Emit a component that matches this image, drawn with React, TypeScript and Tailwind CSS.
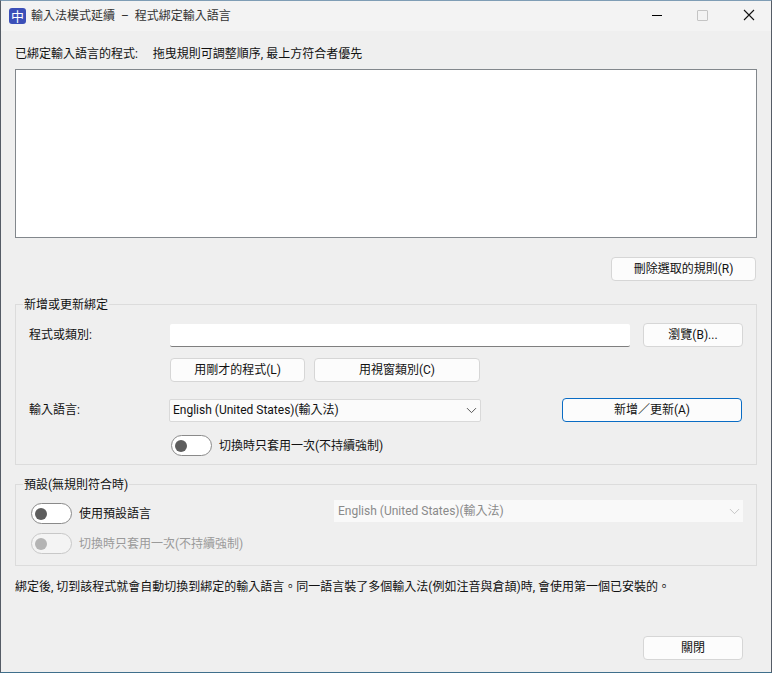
import { ChevronDown } from "lucide-react";

const font = "font-['Roboto','Noto_Sans_CJK_TC',sans-serif]";

const Toggle = ({ disabled = false }: { disabled?: boolean }) => (
  <div
    className={`flex h-[21px] w-[41px] shrink-0 items-center rounded-full border pl-[3px] ${
      disabled ? "border-[#c8c8c8] bg-[#f4f4f4]" : "border-[#8a8a8a] bg-white"
    }`}
  >
    <div className={`size-[12px] rounded-full ${disabled ? "bg-[#b4b4b4]" : "bg-[#5d5d5d]"}`} />
  </div>
);

const Btn = ({ label, className = "", primary = false }: { label: string; className?: string; primary?: boolean }) => (
  <button
    className={`flex h-[24px] items-center justify-center rounded-[4px] border bg-[#fcfcfc] text-[12px] text-[#111] ${
      primary ? "border-[#0a6cc4]" : "border-[#d6d6d6]"
    } ${className}`}
  >
    {label}
  </button>
);

export default function App() {
  return (
    <div className={`flex h-[673px] w-[772px] flex-col overflow-hidden border-x border-b border-t border-x-[#555c66] border-b-[#3f6f8c] border-t-[#7f9db5] bg-[#efefef] text-[12px] leading-[16px] text-[#111] ${font}`}>
      {/* Title bar */}
      <div className="flex h-[30px] shrink-0 items-center bg-[#f3f3f3] pl-[8px]">
        <div className="flex h-[16px] w-[17px] items-center justify-center rounded-[3px] bg-[#3b4fb8] text-[13px] leading-none text-white">中</div>
        <span className="ml-[5px] whitespace-pre text-[#333]">輸入法模式延續  –  程式綁定輸入語言</span>
        <div className="ml-auto flex items-center pb-[2px] pr-[16px]">
          <div className="h-[1px] w-[10px] bg-black" />
          <div className="ml-[35px] size-[11px] rounded-[1px] border border-[#c4c4c4]" />
          <svg viewBox="0 0 12 12" className="ml-[35px] size-[12px] text-[#111]" fill="none" stroke="currentColor" strokeWidth="1.1">
            <path d="M1 1l10 10M11 1L1 11" />
          </svg>
        </div>
      </div>

      <div className="flex flex-1 flex-col px-[14px]">
        <div className="mt-[15px] flex h-[16px] items-center whitespace-pre">已綁定輸入語言的程式:     拖曳規則可調整順序, 最上方符合者優先</div>

        {/* Rule list */}
        <div className="mt-[7px] h-[169px] w-[742px] shrink-0 border border-[#82878c] bg-white" />

        <div className="mt-[19px] flex w-[741px] justify-end">
          <Btn label="刪除選取的規則(R)" className="w-[145px]" />
        </div>

        {/* Add or update */}
        <fieldset className="mt-[14px] h-[170px] w-[742px] shrink-0 border border-[#dcdcdc] px-[7px]">
          <legend className="px-[1px] pt-[2px] leading-[16px]">新增或更新綁定</legend>
          <div className="mt-[10px] flex items-center pl-[6px]">
            <span className="w-[141px]">程式或類別:</span>
            <div className="h-[23px] w-[460px] rounded-[2px] border-b border-[#7f7f7f] bg-white" />
            <Btn label="瀏覽(B)..." className="ml-[13px] w-[100px]" />
          </div>
          <div className="mt-[11px] flex gap-[9px] pl-[147px]">
            <Btn label="用剛才的程式(L)" className="w-[135px]" />
            <Btn label="用視窗類別(C)" className="w-[166px]" />
          </div>
          <div className="mt-[16px] flex items-center pl-[6px]">
            <span className="w-[140px]">輸入語言:</span>
            <div className="flex h-[23px] w-[312px] items-center justify-between rounded-[2px] border border-[#d9d9d9] bg-[#fbfbfb] pl-[3px]">
              <span>English (United States)(輸入法)</span>
              <ChevronDown size={17} strokeWidth={1.4} className="text-[#555]" />
            </div>
            <Btn label="新增／更新(A)" primary className="ml-[81px] w-[180px]" />
          </div>
          <div className="mt-[13px] flex items-center gap-[7px] pl-[148px]">
            <Toggle />
            <span>切換時只套用一次(不持續強制)</span>
          </div>
        </fieldset>

        {/* Default */}
        <fieldset className="mt-[10px] h-[91px] w-[742px] shrink-0 border border-[#dcdcdc] px-[7px]">
          <legend className="px-[1px] pt-[2px] leading-[16px]">預設(無規則符合時)</legend>
          <div className="mt-[10px] flex h-[21px] items-start pl-[8px]">
            <Toggle />
            <span className="ml-[7px] w-[255px] self-center">使用預設語言</span>
            <div className="-mt-[3px] flex h-[22px] w-[409px] items-center justify-between bg-[#f9f9f9] pl-[4px] text-[#8a8a8a]">
              <span>English (United States)(輸入法)</span>
              <ChevronDown size={17} strokeWidth={1} className="text-[#b0b0b0]" />
            </div>
          </div>
          <div className="mt-[9px] flex items-center gap-[7px] pl-[8px] text-[#9a9a9a]">
            <Toggle disabled />
            <span>切換時只套用一次(不持續強制)</span>
          </div>
        </fieldset>

        <p className="mt-[13px] whitespace-nowrap">綁定後, 切到該程式就會自動切換到綁定的輸入語言。同一語言裝了多個輸入法(例如注音與倉頡)時, 會使用第一個已安裝的。</p>

        <div className="mb-[12px] mt-auto flex w-[728px] justify-end">
          <Btn label="關閉" className="w-[100px]" />
        </div>
      </div>
    </div>
  );
}
